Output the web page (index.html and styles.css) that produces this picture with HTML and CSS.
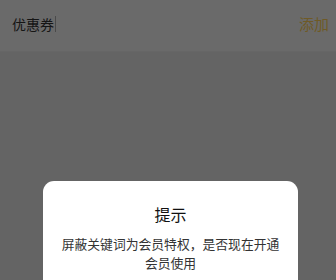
FILE: index.html
```html
<!DOCTYPE html>
<html lang="zh">
<head>
    <meta charset="UTF-8">
    <title>优惠券</title>
    <link rel="stylesheet" href="styles.css">
</head>
<body>
    <div class="page">
        <div class="topbar">
            <span class="title">优惠券<i class="caret"></i></span>
            <span class="add">添加</span>
        </div>
        <div class="content"></div>
    </div>

    <div class="mask">
        <div class="dialog">
            <div class="dialog-title">提示</div>
            <div class="dialog-msg">屏蔽关键词为会员特权，是否现在开通<br>会员使用</div>
        </div>
    </div>
</body>
</html>
```

FILE: styles.css
```css
/* --- BASE --- */
html, body {
    margin: 0;
    padding: 0;
    width: 100%;
    height: 100%;
    overflow: hidden;
    font-family: "Noto Sans CJK SC", "Noto Sans", sans-serif;
}

.page {
    height: 100%;
    display: flex;
    flex-direction: column;
    background: #646464;
}

/* --- TOPBAR --- */
.topbar {
    height: 52px;
    flex-shrink: 0;
    display: flex;
    align-items: center;
    justify-content: space-between;
    padding: 0 7px 0 12px;
    background: #6a6a6a;
    border-bottom: 1px solid #666;
    box-sizing: border-box;
}

.title {
    font-size: 14px;
    color: #151515;
    display: flex;
    align-items: center;
    margin-top: -4px;
}

.caret {
    width: 1px;
    height: 16px;
    background: #4a4a4a;
    margin-left: 1px;
}

.add {
    font-size: 15px;
    color: #6f5a26;
    margin-top: -4px;
}

.content {
    flex: 1;
}

/* --- DIALOG --- */
.mask {
    position: fixed;
    inset: 0;
    padding: 181px 0 0 43px;
    box-sizing: border-box;
}

.dialog {
    width: 255px;
    height: 140px;
    background: #fff;
    border-radius: 11px;
    text-align: center;
    padding-top: 21px;
    box-sizing: border-box;
}

.dialog-title {
    font-size: 16px;
    color: #111;
    line-height: 24px;
}

.dialog-msg {
    margin-top: 9px;
    font-size: 12.8px;
    line-height: 18.5px;
    color: #333;
}
```
